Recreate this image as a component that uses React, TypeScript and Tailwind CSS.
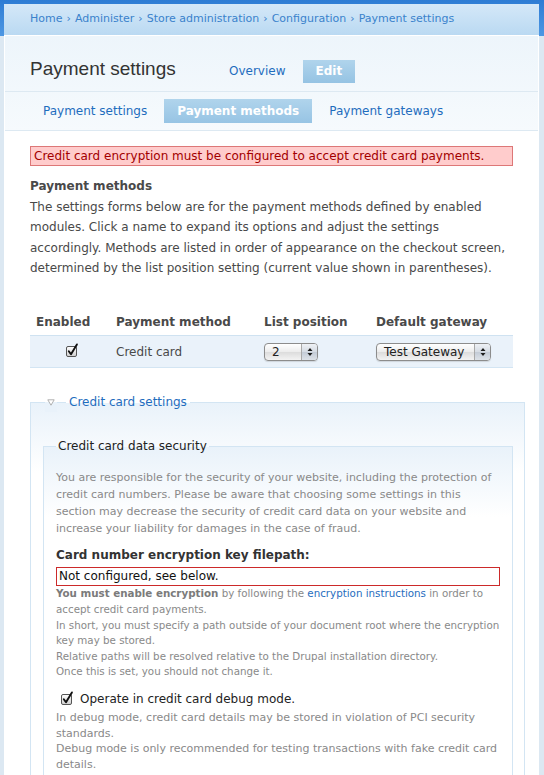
import React from "react";

const crumbs = ["Home", "Administer", "Store administration", "Configuration", "Payment settings"];

const CheckBox = () => (
  <svg width="14" height="14" viewBox="0 0 14 14" className="block">
    <defs>
      <linearGradient id="cbfill" x1="0" y1="0" x2="0" y2="1">
        <stop offset="0" stopColor="#ffffff" />
        <stop offset="1" stopColor="#cfcfcf" />
      </linearGradient>
    </defs>
    <rect x="1.5" y="3.5" width="10" height="10" rx="1.5" fill="url(#cbfill)" stroke="#555" />
    <path
      d="M3.8 8.3 L6 11.3 L11.9 1.4"
      fill="none"
      stroke="#111"
      strokeWidth="1.9"
      strokeLinecap="round"
      strokeLinejoin="round"
    />
  </svg>
);

const SelectBox = ({ value, className }: { value: string; className: string }) => (
  <div
    className={`flex h-[18px] overflow-hidden rounded-[4px] border border-[#8c8c8c] bg-[linear-gradient(#ffffff,#ececec_50%,#dcdcdc_51%,#f3f3f3)] shadow-[0_1px_1px_rgba(0,0,0,0.12)] ${className}`}
  >
    <span className="flex-1 pl-[7px] text-[12px] leading-[16px] text-[#222]">{value}</span>
    <span className="flex w-[16px] items-center justify-center border-l border-[#a9a9a9] bg-[linear-gradient(#eef1f5,#d5dbe3_50%,#c3cbd6_51%,#dde2e8)]">
      <svg width="6" height="10" viewBox="0 0 6 10">
        <path d="M3 1 L5.5 4 H0.5 Z M3 9 L5.5 6 H0.5 Z" fill="#1e1e1e" />
      </svg>
    </span>
  </div>
);

export default function App() {
  return (
    <div className="min-h-[775px] bg-[linear-gradient(to_bottom,#2d7cd4_0px,#4d97e3_36px,#dce8f2_36px)] pl-[4px] pr-[5px] pt-[4px] font-['DejaVu_Sans',Verdana,sans-serif] text-[#494949]">
      {/* breadcrumb */}
      <div className="flex h-[31px] items-center bg-[linear-gradient(to_bottom,#d4e8f8,#bad9f2)] pl-[26px] text-[11px] text-[#3a82cc]">
        {crumbs.map((c, i) => (
          <span key={c}>
            {i > 0 && <span className="px-[4px]">›</span>}
            {c}
          </span>
        ))}
      </div>

      <div className="min-h-[740px] border-x border-t border-white bg-white">
        {/* header */}
        <div className="bg-[linear-gradient(to_bottom,#edf5fb,#f6fafd)]">
          <div className="flex items-start border-b border-[#dde9f2] pb-[8px] pl-[25px] pt-[24px]">
            <h1 className="-mt-[3px] w-[186px] font-['Liberation_Sans',Arial,sans-serif] text-[19px] leading-[23px] text-[#333]">
              Payment settings
            </h1>
            <div className="flex gap-[4px] text-[12px] leading-[23px]">
              <span className="px-[13px] text-[#1f6dbe]">Overview</span>
              <span className="bg-[linear-gradient(#b0d4ec,#95c3e3)] px-[13px] font-bold text-white">Edit</span>
            </div>
          </div>
          <div className="flex gap-[4px] border-b border-[#dde9f2] pb-[7px] pl-[25px] pt-[7px] text-[12px] leading-[24px]">
            <span className="px-[13px] text-[#1f6dbe]">Payment settings</span>
            <span className="bg-[linear-gradient(#b0d4ec,#97c4e4)] px-[13px] font-bold text-white">Payment methods</span>
            <span className="px-[13px] text-[#1f6dbe]">Payment gateways</span>
          </div>
        </div>

        {/* content */}
        <div className="pl-[25px] pt-[15px]">
          <div className="w-[483px]">
            <div className="border border-[#dd7777] bg-[#ffcccc] pl-[3px] text-[12px] leading-[18px] text-[#a30000]">
              Credit card encryption must be configured to accept credit card payments.
            </div>

            <p className="mt-[10px] text-[12px] leading-[20.6px]">
              <strong>Payment methods</strong>
              <br />
              The settings forms below are for the payment methods defined by enabled modules. Click a name to expand
              its options and adjust the settings accordingly. Methods are listed in order of appearance on the checkout
              screen, determined by the list position setting (current value shown in parentheses).
            </p>

            <table className="mt-[30px] w-[483px] border-collapse text-left text-[12px]">
              <thead>
                <tr className="h-[27px] border-b border-[#cfe2f1]">
                  <th className="w-[80px] pl-[6px] font-bold">Enabled</th>
                  <th className="w-[148px] pl-[6px] font-bold">Payment method</th>
                  <th className="w-[112px] pl-[6px] font-bold">List position</th>
                  <th className="pl-[6px] font-bold">Default gateway</th>
                </tr>
              </thead>
              <tbody>
                <tr className="h-[32px] border-b border-[#d3e5f3] bg-[#eaf2fa]">
                  <td>
                    <div className="flex justify-center pb-[4px] pl-[3px]">
                      <CheckBox />
                    </div>
                  </td>
                  <td className="pl-[6px]">Credit card</td>
                  <td className="pl-[6px]">
                    <SelectBox value="2" className="w-[54px]" />
                  </td>
                  <td className="pl-[6px]">
                    <SelectBox value="Test Gateway" className="w-[115px]" />
                  </td>
                </tr>
              </tbody>
            </table>
          </div>

          {/* credit card settings */}
          <fieldset className="mt-[24px] w-[495px] min-w-0 border border-[#d3e5f3] bg-[linear-gradient(#e9f2fa,#ffffff_70px)] pl-[12px] pr-[11px]">
            <legend className="relative ml-[23px] px-[3px] text-[12px] leading-[20px] text-[#1f6dbe]">
              <span className="absolute -left-[21px] top-0 flex h-[20px] w-[12px] items-center justify-center bg-[linear-gradient(#ffffff_50%,#e9f2fa_50%)]">
                <svg width="8" height="7" viewBox="0 0 8 7">
                  <path d="M0.8 0.8 H7.2 L4 6.2 Z" fill="#fff" stroke="#a8a8a8" strokeWidth="0.9" />
                </svg>
              </span>
              Credit card settings
            </legend>

            <fieldset className="mt-[24px] min-w-0 border border-[#d3e5f3] bg-[linear-gradient(#e9f2fa,#ffffff_70px)] px-[12px] pb-[12px]">
              <legend className="px-[2px] text-[12px] leading-[20px] text-[#222]">Credit card data security</legend>

              <p className="mt-[13px] text-[11px] leading-[17px] text-[#898989]">
                You are responsible for the security of your website, including the protection of credit card numbers.
                Please be aware that choosing some settings in this section may decrease the security of credit card
                data on your website and increase your liability for damages in the case of fraud.
              </p>

              <div className="mt-[8px] text-[12px] font-bold leading-[20px] text-[#333]">
                Card number encryption key filepath:
              </div>
              <div className="mt-[2px] h-[19px] border border-[#cc2a2a] bg-white pl-[2px] text-[12px] leading-[17px] text-[#111]">
                Not configured, see below.
              </div>
              <div className="text-[10.3px] leading-[15.6px] text-[#898989]">
                <div className="whitespace-nowrap">
                  <strong className="text-[#7b7b7b]">You must enable encryption</strong> by following the{" "}
                  <span className="text-[#1f6dbe]">encryption instructions</span> in order to
                </div>
                <div className="whitespace-nowrap">accept credit card payments.</div>
                <div className="whitespace-nowrap">
                  In short, you must specify a path outside of your document root where the encryption
                </div>
                <div className="whitespace-nowrap">key may be stored.</div>
                <div className="whitespace-nowrap">
                  Relative paths will be resolved relative to the Drupal installation directory.
                </div>
                <div className="whitespace-nowrap">Once this is set, you should not change it.</div>
              </div>

              <label className="mt-[9px] flex items-center gap-[6px] pl-[4px] text-[12px] leading-[20px] text-[#222]">
                <span className="-mt-[3px]">
                  <CheckBox />
                </span>
                Operate in credit card debug mode.
              </label>
              <div className="mt-[1px] text-[11px] leading-[15.6px] text-[#898989]">
                <div className="whitespace-nowrap">
                  In debug mode, credit card details may be stored in violation of PCI security
                </div>
                <div className="whitespace-nowrap">standards.</div>
                <div className="whitespace-nowrap">
                  Debug mode is only recommended for testing transactions with fake credit card
                </div>
                <div className="whitespace-nowrap">details.</div>
              </div>
            </fieldset>
          </fieldset>
        </div>
      </div>
    </div>
  );
}
